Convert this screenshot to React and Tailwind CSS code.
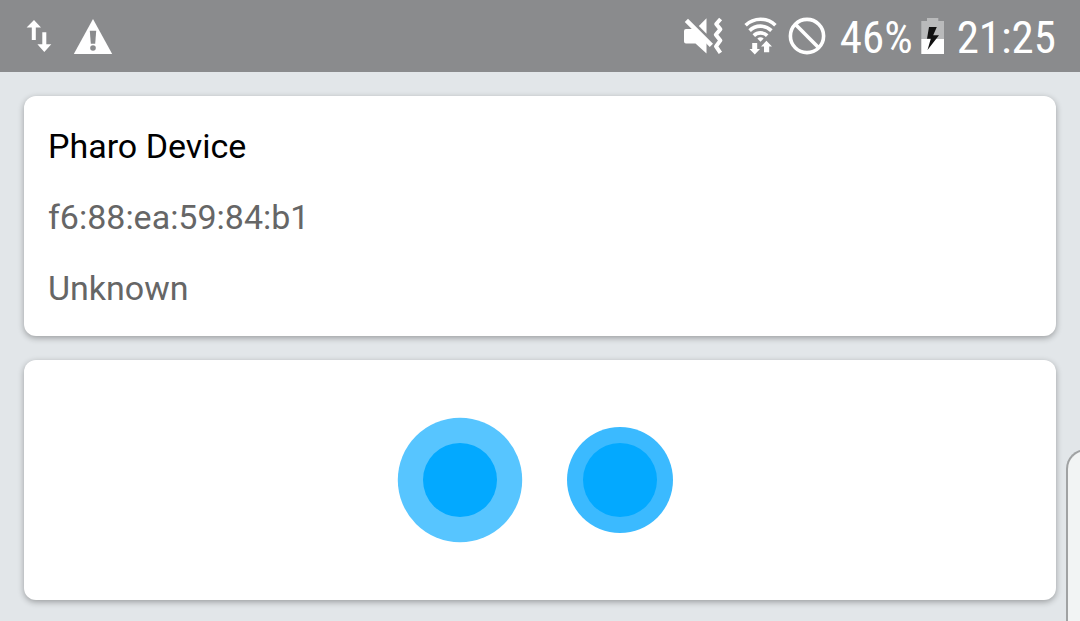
function DataArrowsIcon() {
  return (
    <svg className="h-9 w-7 shrink-0" viewBox="25 18 28 36" fill="#fff" aria-hidden="true">
      <path d="M34 20 41 27.5H35.8V40H31.8V27.5H26.6Z" />
      <path d="M44.3 52 51.3 44.3H46.3V32.3H42.3V44.3H37.4Z" />
    </svg>
  );
}

function WarningIcon() {
  return (
    <svg className="h-9 w-10 shrink-0" viewBox="73 18 40 36" aria-hidden="true">
      <path d="M93 19 112.2 54H73.8Z" fill="#fff" />
      <path d="M89.8 30.7H96.2L95.2 43.8H90.8Z" fill="#8a8b8d" />
      <circle cx="93" cy="48" r="2.8" fill="#8a8b8d" />
    </svg>
  );
}

function MuteVibrateIcon() {
  return (
    <svg className="h-10 w-10 shrink-0" viewBox="683 16 40 40" aria-hidden="true">
      <path d="M698.8 26 706.5 18.3V33.7Z" fill="#fff" />
      <path
        d="M686 29H693.5L706.5 41V53.5L695.5 43.4H686Q684 43.4 684 41.4V31Q684 29 686 29Z"
        fill="#fff"
      />
      <path d="M686.4 20.4 711.4 45.4" fill="none" stroke="#fff" strokeWidth="4.6" />
      <path
        d="M720.6 19 716.2 24 720.4 29.2 715.8 34.8 720.4 40.4 716 46.4 720.4 52.8"
        fill="none"
        stroke="#fff"
        strokeWidth="4"
        strokeLinejoin="round"
      />
    </svg>
  );
}

function WifiIcon() {
  return (
    <svg className="h-10 w-9 shrink-0" viewBox="743 16 36 40" aria-hidden="true">
      <g fill="none" stroke="#fff" strokeWidth="3.6">
        <path d="M745.6 25.2A21.5 21.5 0 0 1 775.4 25.2" />
        <path d="M749.6 30.6A15.5 15.5 0 0 1 771.4 30.6" />
        <path d="M753.8 35.6A9.6 9.6 0 0 1 767.2 35.6" />
      </g>
      <path d="M757.3 38.5Q760.5 35.8 763.7 38.5L760.5 41.7Z" fill="#fff" />
      <path d="M752.2 43H757.2V49H760L754.8 54.6 749.5 49H752.2Z" fill="#fff" />
      <path d="M766.4 40.8 772 46.5H769.2V52.2H764V46.5H761Z" fill="#fff" />
    </svg>
  );
}

function BlockedIcon() {
  return (
    <svg className="size-10 shrink-0" viewBox="0 0 40 40" fill="none" stroke="#fff" aria-hidden="true">
      <circle cx="20" cy="20" r="16.6" strokeWidth="3.6" />
      <path d="M8.3 8.3 31.7 31.7" strokeWidth="3.6" />
    </svg>
  );
}

function BatteryIcon() {
  return (
    <svg className="h-9 w-6 shrink-0" viewBox="921 18 24 36" aria-hidden="true">
      <path d="M927 18H938.3V21H944V39H921.3V21H927Z" fill="#b9babb" />
      <path d="M921.3 39H944V54H921.3Z" fill="#fff" />
      <path d="M929 27H936.8L933.2 35.2H939L927.5 50 930.8 38.8H927Z" fill="#111" />
    </svg>
  );
}

function StatusBar() {
  return (
    <header className="flex h-18 items-center justify-between bg-[#8a8b8d] pr-6 pl-[25px] text-white">
      <div className="flex items-center gap-5">
        <DataArrowsIcon />
        <WarningIcon />
      </div>
      <div className="flex items-center font-['Roboto_Condensed','Liberation_Sans_Narrow',Roboto,sans-serif] text-[45px] leading-[46px]">
        <div className="flex items-center">
          <MuteVibrateIcon />
          <span className="w-5" />
          <WifiIcon />
          <span className="w-2" />
          <BlockedIcon />
        </div>
        <span className="ml-[13px] pt-1">46%</span>
        <span className="ml-2 flex"><BatteryIcon /></span>
        <time className="ml-3 pt-1">21:25</time>
      </div>
    </header>
  );
}

function Card({ className, children }) {
  return (
    <section
      className={`rounded-xl bg-white shadow-[0_2px_6px_rgba(0,0,0,0.32)] ${className}`}
    >
      {children}
    </section>
  );
}

export default function App() {
  return (
    <div className="relative min-h-screen overflow-hidden bg-[#e2e6e9] font-[Roboto,sans-serif]">
      <StatusBar />
      <main className="flex flex-col gap-6 p-6 pb-[21px]">
        <Card className="flex flex-col gap-[31px] px-6 pt-[30px] pb-7 text-[34px] leading-10 text-[#666]">
          <h1 className="text-black">Pharo Device</h1>
          <p>f6:88:ea:59:84:b1</p>
          <p>Unknown</p>
        </Card>
        <Card className="flex h-60 items-center justify-center">
          <svg className="h-32 w-72" viewBox="396 416 288 128" role="img" aria-label="Activity">
            <circle cx="460" cy="480" r="62.2" fill="#57c5ff" />
            <circle cx="460" cy="480" r="37" fill="#03a9ff" />
            <circle cx="620" cy="480" r="53" fill="#3bbaff" />
            <circle cx="620" cy="480" r="37" fill="#03a9ff" />
          </svg>
        </Card>
      </main>
      <div className="absolute -right-2 -bottom-1 h-[176px] w-[22px] rounded-tl-[20px] border-t-2 border-l-2 border-[#a0a2a3] bg-[#f2f4f4]" />
    </div>
  );
}
